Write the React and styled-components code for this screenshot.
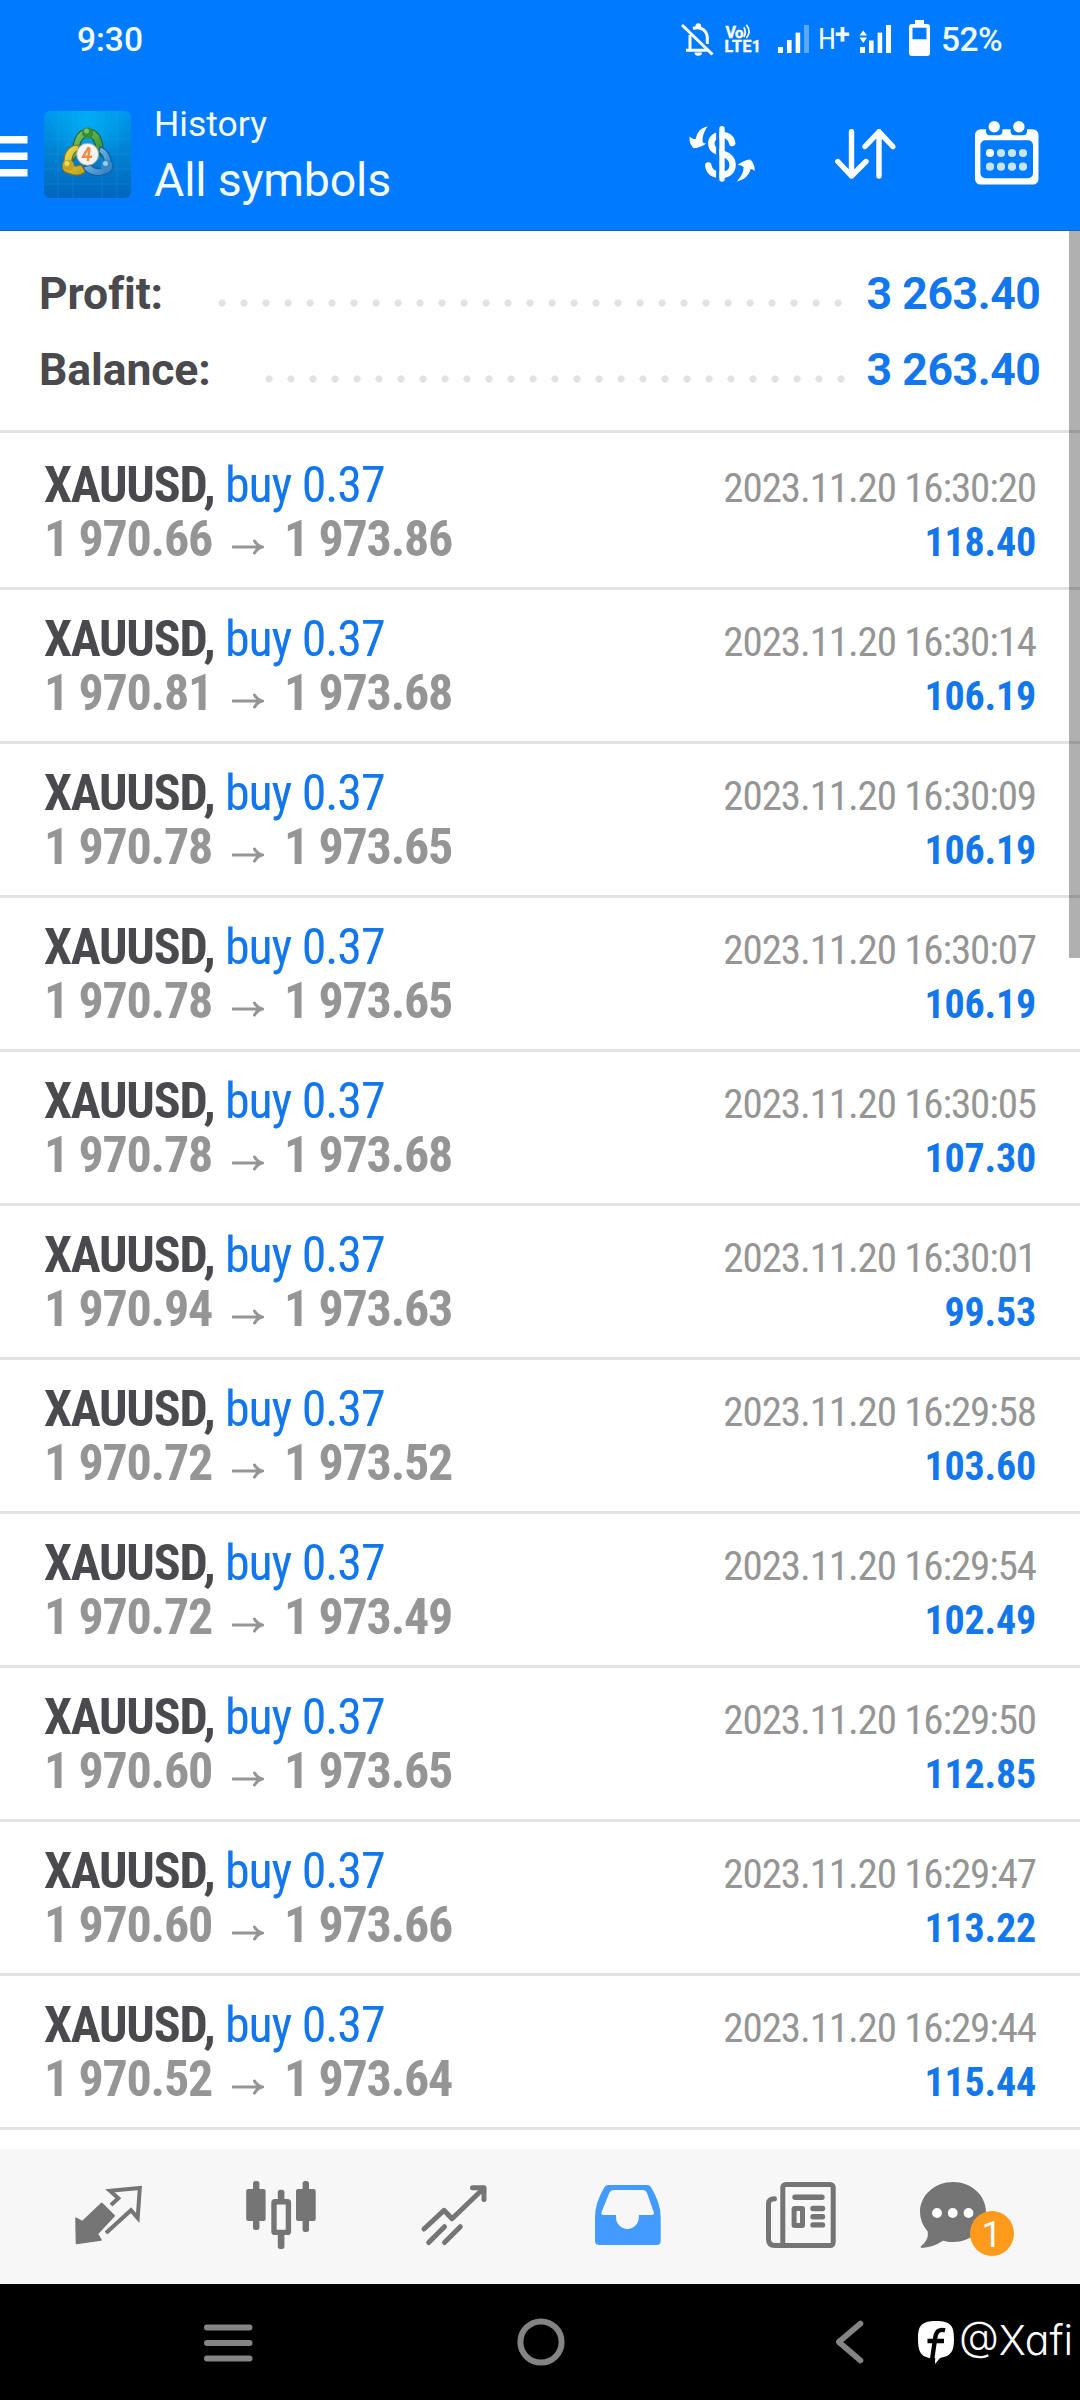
import React from 'react'
import styled, { createGlobalStyle } from 'styled-components'

const deals = [
  { open: '1 970.66', close: '1 973.86', time: '2023.11.20 16:30:20', profit: '118.40' },
  { open: '1 970.81', close: '1 973.68', time: '2023.11.20 16:30:14', profit: '106.19' },
  { open: '1 970.78', close: '1 973.65', time: '2023.11.20 16:30:09', profit: '106.19' },
  { open: '1 970.78', close: '1 973.65', time: '2023.11.20 16:30:07', profit: '106.19' },
  { open: '1 970.78', close: '1 973.68', time: '2023.11.20 16:30:05', profit: '107.30' },
  { open: '1 970.94', close: '1 973.63', time: '2023.11.20 16:30:01', profit: '99.53' },
  { open: '1 970.72', close: '1 973.52', time: '2023.11.20 16:29:58', profit: '103.60' },
  { open: '1 970.72', close: '1 973.49', time: '2023.11.20 16:29:54', profit: '102.49' },
  { open: '1 970.60', close: '1 973.65', time: '2023.11.20 16:29:50', profit: '112.85' },
  { open: '1 970.60', close: '1 973.66', time: '2023.11.20 16:29:47', profit: '113.22' },
  { open: '1 970.52', close: '1 973.64', time: '2023.11.20 16:29:44', profit: '115.44' },
]

/* status bar icons */

const BellOffIcon = () => (
  <Icon width="33" height="33" viewBox="0 0 33 33">
    <path d="M9 12V27M5 27.2H29M12 5.5C20 2.5 26.3 8 26.3 15V21" fill="none" stroke="#fff" strokeWidth="3" />
    <circle cx="17.3" cy="3" r="2.8" fill="#fff" />
    <path d="M13.5 29.5h7.5a3.7 3.2 0 0 1-7.5 0z" fill="#fff" />
    <path d="M3 0.5 33 30" stroke="#007aff" strokeWidth="2" />
    <path d="M1 2 31.5 31.5" stroke="#fff" strokeWidth="3" />
  </Icon>
)

const VolteIcon = () => (
  <Icon width="35" height="30" viewBox="0 0 35 30" $left={11}>
    <g fill="#fff" stroke="#fff" strokeWidth="0.4" fontFamily="Roboto, sans-serif" fontWeight="700">
      <text x="0.5" y="13.5" fontSize="16">V</text>
      <text x="10" y="13.5" fontSize="15">o</text>
      <text x="-0.5" y="28" fontSize="16" textLength="27">LTE</text>
      <text x="26.8" y="28" fontSize="16">1</text>
    </g>
    <path d="M18.8 3.2Q21.7 8 18.8 13M21.4 0.8Q26.7 8 21.4 14" fill="none" stroke="#fff" strokeWidth="1.7" />
  </Icon>
)

const SignalIcon = () => (
  <Icon width="31" height="28" viewBox="0 0 31 28" $left={18}>
    <g fill="#fff">
      <rect x="0" y="22" width="5" height="6" />
      <rect x="9" y="15" width="4.6" height="13" />
      <rect x="17.6" y="7.6" width="4.6" height="20.4" />
      <rect x="26" y="0" width="5" height="28" opacity="0.35" />
    </g>
  </Icon>
)

const DataSignalIcon = () => (
  <Icon width="31" height="28" viewBox="0 0 31 28" $left={10}>
    <g fill="#fff">
      <rect x="0" y="22" width="5" height="6" />
      <rect x="9" y="15.5" width="4.6" height="12.5" />
      <rect x="17.6" y="7.6" width="4.6" height="20.4" />
      <rect x="26" y="0" width="5" height="28" />
      <path d="M-0.5 10.5 3.2 5.5 7 10.5zM-0.5 12.5 3.2 18 7 12.5z" />
    </g>
  </Icon>
)

const BatteryIcon = () => (
  <Icon width="21" height="36" viewBox="0 0 21 36" $left={18} $up={1}>
    <path
      d="M6 0h9v4h3a3 3 0 0 1 3 3v26a3 3 0 0 1-3 3H3a3 3 0 0 1-3-3V7a3 3 0 0 1 3-3h3zM3.5 7.8v11.4h14V7.8z"
      fill="#fff" fillRule="evenodd"
    />
  </Icon>
)

/* header icons */

const MenuIcon = () => (
  <Icon width="28" height="41" viewBox="0 0 28 41" $up={-2}>
    <path d="M0 3.7H27.5M0 20.2H27.5M0 36.7H27.5" stroke="#fff" strokeWidth="7.4" />
  </Icon>
)

const LogoIcon = () => (
  <Icon width="87" height="87" viewBox="0 0 87 87" $left={16}>
    <defs>
      <linearGradient id="tile" x1="0" y1="0" x2="0" y2="1">
        <stop offset="0" stopColor="#0096ee" />
        <stop offset="0.5" stopColor="#0080d0" />
        <stop offset="1" stopColor="#0066bd" />
      </linearGradient>
      <radialGradient id="glow" cx="0.5" cy="0.12" r="0.5">
        <stop offset="0" stopColor="#00b4f6" stopOpacity="0.8" />
        <stop offset="1" stopColor="#00b4f6" stopOpacity="0" />
      </radialGradient>
      <linearGradient id="green" x1="0" y1="0" x2="1" y2="1">
        <stop offset="0" stopColor="#86c767" />
        <stop offset="1" stopColor="#2b8527" />
      </linearGradient>
      <linearGradient id="yellow" x1="0" y1="0" x2="1" y2="1">
        <stop offset="0" stopColor="#f2e25c" />
        <stop offset="1" stopColor="#b79a14" />
      </linearGradient>
      <linearGradient id="blue" x1="0" y1="0" x2="1" y2="1">
        <stop offset="0" stopColor="#8fd0f3" />
        <stop offset="1" stopColor="#2277c0" />
      </linearGradient>
    </defs>
    <rect width="87" height="87" rx="6" fill="url(#tile)" />
    <rect width="87" height="87" rx="6" fill="url(#glow)" />
    <path d="M14 0V87M29 0V87M58 0V87M73 0V87M0 28H87M0 43H87M0 58H87M0 73H87" stroke="#35a7e6" strokeWidth="1" opacity="0.25" />
    <path d="M29 50C27 34 31 18 44 18C57 18 61 34 58 46L52 38C51 29 48 26 44 26C38 26 35 32 36 40Z" fill="url(#green)" stroke="#17693d" strokeWidth="1.2" />
    <path d="M34 34C25 34 20 42 20 50C17 55 18 61 24 62C32 66 40 64 43 58L36 54C30 57 27 53 28 48C29 43 31 40 35 39Z" fill="url(#yellow)" stroke="#80741d" strokeWidth="1.2" />
    <path d="M56 36C64 38 67 46 67 51C71 56 68 62 61 63C53 67 42 63 39 56L47 54C52 59 58 59 60 54C61 49 59 44 55 41Z" fill="url(#blue)" stroke="#195c97" strokeWidth="1.2" />
    <circle cx="43.7" cy="22" r="5.7" fill="#368d36" />
    <circle cx="42.5" cy="20" r="2.5" fill="#81bd70" />
    <circle cx="24.3" cy="54.5" r="5.7" fill="#c5a51e" />
    <circle cx="23" cy="52.5" r="2.5" fill="#ead967" />
    <circle cx="62.5" cy="54.5" r="5.7" fill="#3887c8" />
    <circle cx="61.5" cy="52.5" r="2.5" fill="#92ceef" />
    <circle cx="43.6" cy="43.3" r="11" fill="#f5f3f3" stroke="#a8a99a" strokeWidth="1" />
    <path d="M44.8 36 39 45.8H48M45.5 36.5 43.8 50.2" fill="none" stroke="#ee8b45" strokeWidth="2.4" />
  </Icon>
)

const CurrencyIcon = () => (
  <Icon width="66" height="56" viewBox="0 0 66 56">
    <path
      d="M43.2 17C42 11 37.5 9 33 9C27 9 22.3 12 22.3 17.5C22.3 24 28 25.5 33 27.2C39 29.2 43.6 32 43.6 38.5C43.6 45.5 38.5 49 32.5 49C25 49 20.2 46 19.3 39.5"
      fill="none" stroke="#fff" strokeWidth="6.4" strokeLinecap="round"
    />
    <path d="M28.8 1V54" stroke="#007aff" strokeWidth="3.4" />
    <path d="M33 2.8V53" stroke="#fff" strokeWidth="5.4" strokeLinecap="round" />
    <path d="M18.8.6C12 1.5 8 6.5 6.8 12.8C4.5 13.5 2.5 12.5.6 10.5C0 15 2 20.5 5 22.3C9 22 14 20 17.3 17.6C15.8 17.5 14.5 17 13.7 16C13 10.5 15.5 4.5 18.8.6Z" fill="#fff" />
    <path d="M47.8 55.4C55 54 60 49.5 61.5 43.2C63 43 64.5 43.6 65.8 45C66 40.5 64 35.5 61.2 33.4C57 33.5 52 35.8 48.6 39C51 39 53.5 39.8 54.6 41.3C54.5 47 51.5 51.5 47.8 55.4Z" fill="#fff" />
  </Icon>
)

const SortIcon = () => (
  <Icon width="61" height="50" viewBox="0 0 61 50" $left={80}>
    <path
      d="M16.5 2.8V47M2.8 32.5 16.5 47 31 32.5M44 47V2.8M30 17.5 44 2.8 57.8 17.5"
      fill="none" stroke="#fff" strokeWidth="5.4" strokeLinecap="round" strokeLinejoin="round"
    />
  </Icon>
)

const CalendarIcon = () => (
  <Icon width="64" height="64" viewBox="0 0 64 64" $left={79} $up={1}>
    <rect y="8.3" width="63.5" height="55.2" rx="5.5" fill="#fff" />
    <rect x="5.4" y="19.3" width="52.6" height="38" rx="5" fill="#007aff" />
    <rect x="11" y="0" width="16.4" height="14.3" rx="4" fill="#007aff" />
    <rect x="35.6" y="0" width="16.4" height="14.3" rx="4" fill="#007aff" />
    <circle cx="19.2" cy="5.8" r="5.7" fill="#fff" />
    <circle cx="43.9" cy="5.8" r="5.7" fill="#fff" />
    {[32, 45.7].map((y) =>
      [15, 26, 37, 48].map((x) => (
        <circle key={x + '-' + y} cx={x} cy={y} r="4.1" fill={x === 15 && y === 32 ? '#fff' : '#c5e4ff'} />
      ))
    )}
  </Icon>
)

const ArrowIcon = () => (
  <PriceArrow width="32" height="16" viewBox="0 0 32 16">
    <path d="M1 8H29M22.5 2Q25 6.5 30 8Q25 9.5 22.5 14" fill="none" stroke="#959595" strokeWidth="3" strokeLinecap="round" />
  </PriceArrow>
)

/* tab icons */

const QuotesIcon = () => (
  <Icon width="67" height="59" viewBox="0 0 67 59" $left={1}>
    <path d="M1 32.3 7.3 35.8 26.7 17.3 39.3 29.7 22.3 48 26 54 1.5 57.5Z" fill="#757575" stroke="#757575" strokeWidth="1.6" strokeLinejoin="round" />
    <path d="M36 19 43.3 12.3 35 4.8 64.8 2 62.7 32 56 24.2 31 47" fill="none" stroke="#757575" strokeWidth="4" />
  </Icon>
)

const ChartIcon = () => (
  <Icon width="70" height="68" viewBox="0 0 70 68">
    <g fill="#757575">
      <rect x="0.2" y="8" width="19.4" height="32" rx="2" />
      <rect x="7" y="0" width="6.4" height="49" rx="2.5" />
      <rect x="50" y="8" width="19.7" height="32" rx="2" />
      <rect x="56.6" y="0" width="6.4" height="51" rx="2.5" />
      <rect x="31.8" y="8.7" width="6.6" height="12" rx="2.5" />
      <rect x="31.8" y="51" width="6.6" height="17" rx="2.5" />
    </g>
    <rect x="28" y="20.8" width="14.4" height="30.6" rx="1" fill="none" stroke="#757575" strokeWidth="5.4" />
  </Icon>
)

const TradeIcon = () => (
  <Icon width="66" height="60" viewBox="0 0 66 60">
    <path
      d="M3 44 23 25.3 31 33.8 63 3M51.5 2.8H63V14.5M7.7 57.5 23.5 41.7M23.5 57.5 39.3 41.7"
      fill="none" stroke="#757575" strokeWidth="5" strokeLinecap="round" strokeLinejoin="round"
    />
  </Icon>
)

const HistoryIcon = () => (
  <Icon width="66" height="60" viewBox="0 0 66 60">
    <path
      d="M13 0H52Q55 0 56.5 3Q65.5 18 65.7 32V56Q65.7 60 61.5 60H4.5Q0 60 0 56V32Q0 18 9 3Q10.5 0 13 0ZM18.5 5Q15.5 5 14.5 7.5L6.6 27Q5.6 30 8.5 30H21V32.5A11.4 11.4 0 0 0 43.8 32.5V30H56.5Q59.8 30 58.7 27L51.8 7.5Q51 5 48 5Z"
      fill="#449bff" fillRule="evenodd"
    />
  </Icon>
)

const NewsIcon = () => (
  <Icon width="70" height="66" viewBox="0 0 70 66">
    <g fill="none" stroke="#757575" strokeWidth="5" strokeLinecap="round">
      <rect x="16.8" y="2.5" width="50.4" height="61" rx="3" />
      <path d="M8.5 16.8Q2.5 17 2.5 22V57Q2.5 63.5 9 63.5H20" />
      <path d="M29 15.3H56M47 26.5H56.5M47 34.7H56.5M47 42.9H56.5" strokeWidth="5.4" />
      <rect x="28.1" y="26.4" width="8.4" height="17" rx="0.5" />
    </g>
  </Icon>
)

const ChatIcon = () => (
  <Icon width="66" height="66" viewBox="0 0 66 66">
    <path
      d="M33 0C51 0 66 13 66 30S51 60 33 60C29 60 26 59.6 23 58.8Q13 65.6 1.5 66Q0 65.5 1 64.3Q9 58 7.8 49.5Q0 41 0 30C0 13 15 0 33 0Z"
      fill="#757575"
    />
    <g fill="#fff">
      <circle cx="17" cy="31" r="4.9" />
      <circle cx="32.7" cy="31" r="4.9" />
      <circle cx="48.5" cy="31" r="4.9" />
    </g>
  </Icon>
)

/* system navigation icons */

const RecentsIcon = () => (
  <Icon width="49" height="38" viewBox="0 0 49 38" $left={204} $up={-1}>
    <path d="M3 3.5H45.5M3 19H45.5M3 34.5H45.5" stroke="#848484" strokeWidth="6" strokeLinecap="round" />
  </Icon>
)

const HomeIcon = () => (
  <Icon width="48" height="48" viewBox="0 0 48 48" $left={263.5}>
    <circle cx="24" cy="24" r="20.6" fill="none" stroke="#848484" strokeWidth="6" />
  </Icon>
)

const BackIcon = () => (
  <Icon width="29" height="44" viewBox="0 0 29 44" $left={270.5}>
    <path d="M25.5 3.5 3.8 22 25.5 40.5" fill="none" stroke="#848484" strokeWidth="5.6" strokeLinecap="round" strokeLinejoin="round" />
  </Icon>
)

const FeedIcon = () => (
  <Icon width="36" height="43" viewBox="0 0 36 43" $left={54}>
    <path d="M18 0C32.5 0 36 4.5 36 18C36 30 33.5 35 22 37L17 43L17.2 37H11C2.5 35 0 30 0 18C0 4.5 3.5 0 18 0Z" fill="#fff" />
    <path d="M27 9.3Q18.5 7 17.2 17L14 39M9.5 20H26" fill="none" stroke="#000" strokeWidth="4.4" />
  </Icon>
)

const tabs = [QuotesIcon, ChartIcon, TradeIcon, HistoryIcon, NewsIcon]

const App = () => {
  return (
    <Screen>
      <GlobalStyle />
      <Header>
        <StatusBar>
          <Clock>9:30</Clock>
          <StatusIcons>
            <BellOffIcon />
            <VolteIcon />
            <SignalIcon />
            <Network>H<Plus>+</Plus></Network>
            <DataSignalIcon />
            <BatteryIcon />
            <Percent>52%</Percent>
          </StatusIcons>
        </StatusBar>
        <AppBar>
          <MenuIcon />
          <LogoIcon />
          <Titles>
            <Subtitle>History</Subtitle>
            <Title>All symbols</Title>
          </Titles>
          <Actions>
            <CurrencyIcon />
            <SortIcon />
            <CalendarIcon />
          </Actions>
        </AppBar>
      </Header>

      <Content>
        <Summary>
          <SummaryLine>
            <Label>Profit:</Label>
            <Leader $dots={29} $gap={18} />
            <Total>3 263.40</Total>
          </SummaryLine>
          <SummaryLine>
            <Label>Balance:</Label>
            <Leader $dots={27} $gap={15} />
            <Total>3 263.40</Total>
          </SummaryLine>
        </Summary>
        <Deals>
          {deals.map((deal) => (
            <Deal key={deal.time}>
              <DealLine>
                <Symbol>XAUUSD, <Side>buy 0.37</Side></Symbol>
                <Time>{deal.time}</Time>
              </DealLine>
              <DealLine>
                <Prices>{deal.open}<ArrowIcon />{deal.close}</Prices>
                <Profit>{deal.profit}</Profit>
              </DealLine>
            </Deal>
          ))}
        </Deals>
        <Scrollbar />
      </Content>

      <TabBar>
        {tabs.map((TabIcon, i) => (
          <Tab key={i}><TabIcon /></Tab>
        ))}
        <Tab>
          <ChatTab>
            <ChatIcon />
            <Badge>1</Badge>
          </ChatTab>
        </Tab>
      </TabBar>

      <SystemBar>
        <RecentsIcon />
        <HomeIcon />
        <BackIcon />
        <FeedIcon />
        <Handle>@Xafi</Handle>
      </SystemBar>
    </Screen>
  )
}

const GlobalStyle = createGlobalStyle`
  body {
    margin: 0;
    background: #fff;
    font-family: Roboto, 'Liberation Sans', sans-serif;
  }
`;

const Icon = styled.svg`
  display: block;
  flex: none;
  overflow: visible;
  margin-left: ${(p) => p.$left || 0}px;
  margin-bottom: ${(p) => (p.$up || 0) * 2}px;
`;

const Screen = styled.div`
  display: flex;
  flex-direction: column;
  width: 1080px;
  height: 2400px;
  overflow: hidden;
`;

const Header = styled.header`
  height: 230px;
  background: #007aff;
  border-bottom: 1px solid #1f65ac;
  color: #f2fbff;
`;

const StatusBar = styled.div`
  display: flex;
  align-items: center;
  justify-content: space-between;
  height: 78px;
  padding: 0 77px;
`;

const Clock = styled.span`
  font-size: 33.5px;
  font-weight: 500;
`;

const StatusIcons = styled.div`
  display: flex;
  align-items: center;
`;

const Network = styled.span`
  display: flex;
  width: 32px;
  margin-left: 9px;
  font-size: 29px;
  font-stretch: 80%;
  line-height: 40px;
`;

const Plus = styled.span`
  margin-left: -1px;
  font-size: 27px;
  font-stretch: normal;
  font-weight: 700;
  line-height: 32px;
`;

const Percent = styled.span`
  width: 62px;
  margin-left: 11px;
  font-size: 33.5px;
  font-weight: 500;
  letter-spacing: -0.5px;
`;

const AppBar = styled.div`
  display: flex;
  align-items: center;
  height: 152px;
  padding-right: 41px;
`;

const Titles = styled.div`
  margin-left: 23px;
  padding-top: 2px;
  white-space: nowrap;
`;

const Subtitle = styled.div`
  font-size: 35.5px;
  line-height: 50px;
`;

const Title = styled.div`
  font-size: 46.5px;
  line-height: 63px;
  letter-spacing: -0.2px;
`;

const Actions = styled.div`
  display: flex;
  align-items: center;
  margin-left: auto;
`;

const Content = styled.main`
  position: relative;
  flex: 1;
  min-height: 0;
  overflow: hidden;
`;

const Summary = styled.section`
  padding: 25px 39.5px 22px 39px;
  border-bottom: 3px solid #e3e3e3;
`;

const SummaryLine = styled.div`
  display: flex;
  height: 76px;
  font-size: 44.5px;
  font-weight: 700;
  line-height: 76px;
`;

const Label = styled.span`
  color: #4a494e;
  letter-spacing: -0.1px;
`;

const Leader = styled.span`
  width: ${(p) => p.$dots * 22}px;
  height: 8px;
  margin: 43px ${(p) => p.$gap}px 0 auto;
  background: radial-gradient(circle, #e2e2e2 3.2px, transparent 4px) 0 0 / 22px 8px repeat-x;
`;

const Total = styled.span`
  color: #1277ec;
  letter-spacing: -0.4px;
`;

const Deals = styled.div`
  padding-top: 3px;
`;

const Deal = styled.div`
  box-sizing: border-box;
  height: 154px;
  padding: 22px 44px 0;
  border-bottom: 3px solid #e3e3e3;
  font-stretch: condensed;
`;

const DealLine = styled.div`
  display: flex;
  align-items: baseline;
  justify-content: space-between;
  height: 54px;
  line-height: 54px;
  white-space: nowrap;
`;

const Symbol = styled.span`
  color: #4a494e;
  font-size: 50px;
  font-weight: 700;
  letter-spacing: -1.2px;
`;

const Side = styled.span`
  color: #1277ec;
  font-weight: 400;
  letter-spacing: -1.1px;
`;

const Prices = styled.span`
  color: #959595;
  font-size: 50px;
  font-weight: 700;
  letter-spacing: -1.2px;
`;

const PriceArrow = styled.svg`
  margin: 0 20px 1px;
`;

const Time = styled.span`
  color: #959595;
  font-size: 41px;
  line-height: 40px;
  letter-spacing: -1.1px;
`;

const Profit = styled.span`
  color: #1277ec;
  font-size: 40px;
  font-weight: 700;
  line-height: 40px;
  letter-spacing: -0.2px;
`;

const Scrollbar = styled.div`
  position: absolute;
  top: 0;
  right: 0;
  width: 11px;
  height: 727px;
  background: rgba(0, 0, 0, 0.31);
`;

const TabBar = styled.nav`
  box-sizing: border-box;
  display: grid;
  grid-template-columns: repeat(6, 173.4px);
  align-items: center;
  height: 135px;
  padding: 0 0 3px 21px;
  background: #f7f7f7;
`;

const Tab = styled.div`
  display: flex;
  justify-content: center;
`;

const ChatTab = styled.div`
  position: relative;
  width: 110px;
`;

const Badge = styled.span`
  position: absolute;
  left: 50px;
  top: 29px;
  width: 44px;
  height: 45px;
  border-radius: 50%;
  background: #ff9b1c;
  color: #fff;
  font-size: 36px;
  line-height: 48px;
  text-align: center;
`;

const SystemBar = styled.div`
  display: flex;
  align-items: center;
  height: 116px;
  background: #000;
`;

const Handle = styled.span`
  margin-left: 5px;
  padding-bottom: 4px;
  color: #fff;
  font-family: Inter, 'Liberation Sans', sans-serif;
  font-size: 41px;
  font-weight: 350;
  font-feature-settings: 'cv11';
  line-height: 110px;
`;

export default App;
